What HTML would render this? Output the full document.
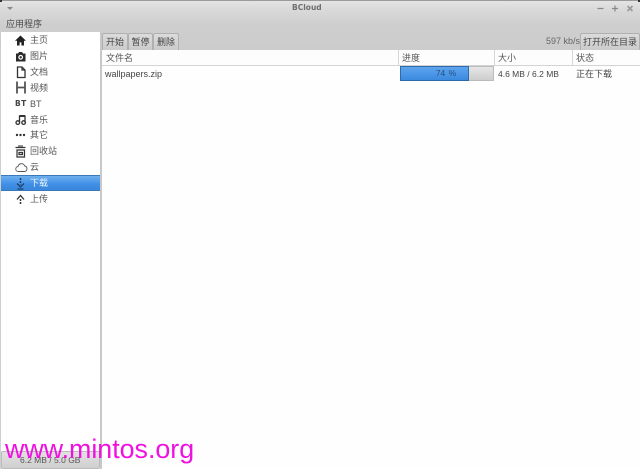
<!DOCTYPE html>
<html>
<head>
<meta charset="utf-8">
<style>
html,body{margin:0;padding:0;width:640px;height:469px;overflow:hidden;background:#cfcfcf;font-family:"Liberation Sans","Noto Sans CJK SC",sans-serif;font-size:9px;color:#444}
.a{position:absolute;white-space:nowrap}
#top{left:0;top:0;width:640px;height:50px;background:linear-gradient(#e4e4e4 0,#dadada 8px,#cecece 24px,#cccccc 50px);border-top:1px solid #9a9a9a;box-sizing:border-box}
#side{left:1px;top:32px;width:99px;height:437px;background:#fff}
#sep{left:100px;top:32px;width:2px;height:437px;background:#c8c8c8}
#main{left:102px;top:50px;width:538px;height:419px;background:#fefefe}
.it{left:30px;height:16px;line-height:16px;font-size:9px;color:#555}
.ic{position:absolute;left:14px;width:13px;height:13px}
.btn{top:33px;height:16px;line-height:16px;text-align:center;font-size:9px;color:#444;background:linear-gradient(#dcdcdc,#cbcbcb);border:1px solid #b0b0b0;border-bottom:0;box-sizing:content-box;border-radius:2px 2px 0 0}
.th{top:50px;height:16px;line-height:16px;font-size:9px;color:#555}
.vl{top:50px;width:1px;height:16px;background:#d6d6d6}
</style>
</head>
<body>
<div class="a" id="top"></div>
<div class="a" style="left:0;top:0;width:2px;height:2px;background:#333"></div>
<div class="a" style="right:0;top:0;width:2px;height:2px;background:#333"></div>
<div class="a" style="left:292px;top:3px;font-family:'DejaVu Sans',sans-serif;font-size:7.5px;font-weight:bold;color:#6f6f6f;line-height:10px">BCloud</div>
<div class="a" style="left:7px;top:7px;width:0;height:0;border:3px solid transparent;border-top:3px solid #888"></div>
<svg class="a" style="left:596px;top:3px" width="40" height="12"><path d="M1.5 5.5h6M16 5.5h6M19 2.5v6" stroke="#888" stroke-width="1.2" fill="none"/><path d="M31.5 3l5 5M36.5 3l-5 5" stroke="#999" stroke-width="1.6" fill="none"/></svg>
<div class="a" style="left:6px;top:17px;line-height:14px;font-size:9px;color:#4c4c4c">应用程序</div>

<div class="a" id="side"></div>
<div class="a" id="sep"></div>
<div class="a" id="main"></div>

<div class="a" style="left:1px;top:175px;width:99px;height:16px;background:linear-gradient(#6fb0ee,#3f8fe6 60%,#3a87dc);border-top:1px solid #3a78b8;border-bottom:1px solid #3a78b8;box-sizing:border-box"></div>

<svg class="ic a" style="top:34px" viewBox="0 0 13 13"><path d="M6.5 1.5L1 6.8h2V11.5h2.6V8.4h1.8v3.1H10V6.8h2z" fill="#222"/></svg>
<svg class="ic a" style="top:50px" viewBox="0 0 13 13"><path d="M2 3.5h2L5 2h3l1 1.5h2.5v8H2z" fill="#2b2b2b"/><circle cx="6.7" cy="7.3" r="2.4" fill="#fff"/><circle cx="6.7" cy="7.3" r="1.2" fill="#2b2b2b"/></svg>
<svg class="ic a" style="top:66px" viewBox="0 0 13 13"><path d="M3.5 1h4.5L11 4v7.5H3.5zM8 1v3h3" fill="none" stroke="#333" stroke-width="1.3"/></svg>
<svg class="ic a" style="top:81px" viewBox="0 0 13 13"><path d="M3 0.5v12M11 0.5v12M3 6.5h8" fill="none" stroke="#555" stroke-width="1.8"/></svg>
<div class="a" style="left:15px;top:96px;line-height:16px;font-family:'DejaVu Sans',sans-serif;font-size:7.5px;font-weight:bold;color:#444;letter-spacing:.4px">BT</div>
<svg class="ic a" style="top:113px" viewBox="0 0 13 13"><path d="M5.5 9.5V3h5.5v6.5" fill="none" stroke="#333" stroke-width="1.3"/><path d="M5.5 3h5.5" stroke="#333" stroke-width="2"/><circle cx="3.8" cy="9.6" r="1.8" fill="none" stroke="#333" stroke-width="1.3"/><circle cx="9.6" cy="9.6" r="1.8" fill="none" stroke="#333" stroke-width="1.3"/></svg>
<svg class="ic a" style="top:129px" viewBox="0 0 13 13"><circle cx="3" cy="6" r="1.2" fill="#333"/><circle cx="6.5" cy="6" r="1.2" fill="#333"/><circle cx="10" cy="6" r="1.2" fill="#333"/></svg>
<svg class="ic a" style="top:145px" viewBox="0 0 13 13"><path d="M1.5 2.5h10M3 5h7.5v7H3zM5 7.5h3.5v2H5z" fill="none" stroke="#333" stroke-width="1.2"/><path d="M4 1h5" stroke="#333" stroke-width="1"/></svg>
<svg class="ic a" style="top:161px;left:15px" viewBox="0 0 13 13"><path d="M3.5 10.5a2.5 2.5 0 0 1-.5-5 3.5 3.5 0 0 1 6.7-.5 2.8 2.8 0 0 1 0 5.5z" fill="none" stroke="#555" stroke-width=".9"/></svg>
<svg class="ic a" style="top:177px" viewBox="0 0 13 13"><path d="M6.5 1v6.5" fill="none" stroke="#1f3f66" stroke-width="1.5" stroke-dasharray="2 1"/><path d="M3 6.5L6.5 10l3.5-3.5M3.5 12h6" fill="none" stroke="#1f3f66" stroke-width="1.3"/></svg>
<svg class="ic a" style="top:193px" viewBox="0 0 13 13"><path d="M6.5 6v6" fill="none" stroke="#333" stroke-width="1.5" stroke-dasharray="2 1"/><path d="M3 6.5L6.5 2.5l3.5 4" fill="none" stroke="#333" stroke-width="1.3"/></svg>

<div class="a it" style="top:32px">主页</div>
<div class="a it" style="top:48px">图片</div>
<div class="a it" style="top:64px">文档</div>
<div class="a it" style="top:80px">视频</div>
<div class="a it" style="top:96px">BT</div>
<div class="a it" style="top:112px">音乐</div>
<div class="a it" style="top:127px">其它</div>
<div class="a it" style="top:143px">回收站</div>
<div class="a it" style="top:159px">云</div>
<div class="a it" style="top:175px;color:#eef5fd">下载</div>
<div class="a it" style="top:191px">上传</div>

<div class="a btn" style="left:102px;width:24px">开始</div>
<div class="a btn" style="left:128px;width:23px">暂停</div>
<div class="a btn" style="left:153px;width:24px">删除</div>
<div class="a" style="left:546px;top:33px;line-height:16px;font-size:9px;color:#666">597 kb/s</div>
<div class="a btn" style="left:580px;width:58px">打开所在目录</div>

<div class="a" style="left:102px;top:50px;width:538px;height:16px;background:#fdfdfd;border-bottom:1px solid #d4d4d4;box-sizing:border-box"></div>
<div class="a th" style="left:106px">文件名</div>
<div class="a vl" style="left:398px"></div>
<div class="a th" style="left:402px">进度</div>
<div class="a vl" style="left:494px"></div>
<div class="a th" style="left:498px">大小</div>
<div class="a vl" style="left:572px"></div>
<div class="a th" style="left:576px">状态</div>

<div class="a" style="left:105px;top:66px;line-height:16px;font-size:9px;color:#444">wallpapers.zip</div>
<div class="a" style="left:400px;top:66px;width:94px;height:15px;background:linear-gradient(#e6e6e6,#cdcdcd);border:1px solid #bbb;box-sizing:border-box"></div>
<div class="a" style="left:400px;top:66px;width:69px;height:15px;background:linear-gradient(#5ea4ee,#3a8ae0);border:1px solid #2e6aa8;box-sizing:border-box"></div>
<div class="a" style="left:400px;top:66px;width:92px;height:15px;line-height:15px;text-align:center;font-size:8.5px;color:#234f7d;word-spacing:1px">74 %</div>
<div class="a" style="left:498px;top:66px;line-height:16px;font-size:8.5px;color:#444">4.6 MB / 6.2 MB</div>
<div class="a" style="left:576px;top:66px;line-height:16px;font-size:9px;color:#444">正在下载</div>

<div class="a" style="left:1px;top:451px;width:99px;height:18px;background:linear-gradient(#e2e2e2,#cfcfcf);border:1px solid #bcbcbc;border-radius:2px;box-sizing:border-box"></div>
<div class="a" style="left:20px;top:454px;line-height:12px;font-size:8.5px;color:#555">6.2 MB / 5.0 GB</div>
<div class="a" style="left:5px;top:434px;line-height:30px;font-size:26.8px;color:#f010e0">www.mintos.org</div>
</body>
</html>
